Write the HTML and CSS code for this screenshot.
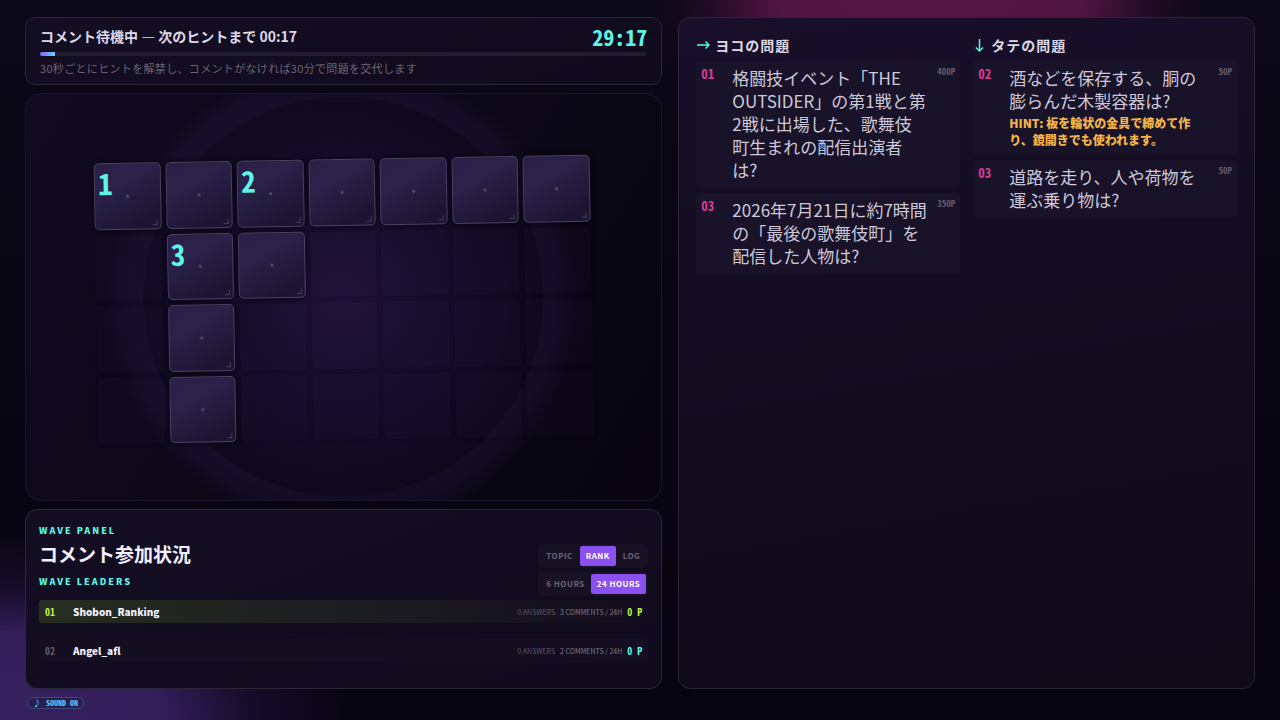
FILE: index.html
```html
<!DOCTYPE html>
<html lang="ja">
<head>
    <meta charset="UTF-8">
    <meta name="viewport" content="width=device-width, initial-scale=1.0">
    <title>クロスワード</title>
    <link rel="stylesheet" href="styles.css">
</head>
<body>
    <main class="layout">
        <div class="left">
            <header class="card status">
                <div class="status-row">
                    <h1>コメント待機中 — 次のヒントまで 00:17</h1>
                    <time class="timer">29:17</time>
                </div>
                <div class="progress"><div class="progress-fill" style="width: 2.4%"></div></div>
                <p>30秒ごとにヒントを解禁し、コメントがなければ30分で問題を交代します</p>
            </header>

            <section class="board">
                <div class="grid">
                    <div class="cell tile"><b>1</b></div>
                    <div class="cell tile"></div>
                    <div class="cell tile"><b>2</b></div>
                    <div class="cell tile"></div>
                    <div class="cell tile"></div>
                    <div class="cell tile"></div>
                    <div class="cell tile"></div>

                    <div class="cell"></div>
                    <div class="cell tile"><b>3</b></div>
                    <div class="cell tile"></div>
                    <div class="cell"></div>
                    <div class="cell"></div>
                    <div class="cell"></div>
                    <div class="cell"></div>

                    <div class="cell"></div>
                    <div class="cell tile"></div>
                    <div class="cell"></div>
                    <div class="cell"></div>
                    <div class="cell"></div>
                    <div class="cell"></div>
                    <div class="cell"></div>

                    <div class="cell"></div>
                    <div class="cell tile"></div>
                    <div class="cell"></div>
                    <div class="cell"></div>
                    <div class="cell"></div>
                    <div class="cell"></div>
                    <div class="cell"></div>
                </div>
            </section>

            <section class="card panel">
                <div class="panel-head">
                    <div class="titles">
                        <p class="eyebrow">WAVE PANEL</p>
                        <h2>コメント参加状況</h2>
                        <p class="eyebrow">WAVE LEADERS</p>
                    </div>
                    <div class="tab-groups">
                        <div class="tabs">
                            <button type="button">TOPIC</button>
                            <button type="button" class="active">RANK</button>
                            <button type="button">LOG</button>
                        </div>
                        <div class="tabs">
                            <button type="button">6 HOURS</button>
                            <button type="button" class="active">24 HOURS</button>
                        </div>
                    </div>
                </div>
                <ol class="leaders">
                    <li class="first">
                        <span class="rank">01</span>
                        <span class="name">Shobon_Ranking</span>
                        <span class="answers">0 ANSWERS</span>
                        <span class="comments">3 COMMENTS / 24H</span>
                        <span class="points">0 P</span>
                    </li>
                    <li>
                        <span class="rank">02</span>
                        <span class="name">Angel_afl</span>
                        <span class="answers">0 ANSWERS</span>
                        <span class="comments">2 COMMENTS / 24H</span>
                        <span class="points">0 P</span>
                    </li>
                </ol>
            </section>
        </div>

        <section class="card clues">
            <div class="clue-col">
                <h2>
                    <svg class="arrow" viewBox="0 0 14 14"><path d="M1 7h12M9.5 3.5L13 7l-3.5 3.5"/></svg>
                    ヨコの問題
                </h2>
                <article class="clue">
                    <span class="no">01</span>
                    <p>格闘技イベント「THE<br>OUTSIDER」の第1戦と第<br>2戦に出場した、歌舞伎<br>町生まれの配信出演者<br>は?</p>
                    <span class="pt">400P</span>
                </article>
                <article class="clue">
                    <span class="no">03</span>
                    <p>2026年7月21日に約7時間<br>の「最後の歌舞伎町」を<br>配信した人物は?</p>
                    <span class="pt">350P</span>
                </article>
            </div>
            <div class="clue-col">
                <h2>
                    <svg class="arrow down" viewBox="0 0 10 14"><path d="M5 1v12M1.5 9.5L5 13l3.5-3.5"/></svg>
                    タテの問題
                </h2>
                <article class="clue">
                    <span class="no">02</span>
                    <div>
                        <p>酒などを保存する、胴の<br>膨らんだ木製容器は?</p>
                        <p class="hint">HINT: 板を輪状の金具で締めて作<br>り、鏡開きでも使われます。</p>
                    </div>
                    <span class="pt">50P</span>
                </article>
                <article class="clue">
                    <span class="no">03</span>
                    <p>道路を走り、人や荷物を<br>運ぶ乗り物は?</p>
                    <span class="pt">50P</span>
                </article>
            </div>
        </section>
    </main>

    <footer>
        <button type="button" class="sound"><span>♪</span>SOUND ON</button>
    </footer>
</body>
</html>
```

FILE: styles.css
```css
:root {
    --cyan: #5ff5e6;
    --lime: #c0f04a;
    --pink: #d83c94;
    --violet: #8b50f0;
    --mono: "Noto Sans Mono CJK JP", "Noto Sans CJK JP", monospace;
}

* {
    box-sizing: border-box;
    margin: 0;
    padding: 0;
}

body {
    display: flex;
    flex-direction: column;
    min-height: 100vh;
    padding: 17px 25px 11px;
    font-family: "Noto Sans CJK JP", sans-serif;
    color: #dcd8e8;
    background:
        radial-gradient(ellipse 280px 190px at 930px -10px, #561640 0, #501540 55%, rgba(60, 16, 52, 0.4) 80%, transparent 100%),
        radial-gradient(ellipse 360px 190px at 0 720px, #36205f 0, #331e5a 45%, rgba(36, 20, 66, 0.5) 70%, transparent 100%),
        linear-gradient(#0b0817, #06040f);
}

button {
    font-family: inherit;
    border: none;
    cursor: pointer;
}

.layout {
    flex: 1;
    display: grid;
    grid-template-columns: 21fr 19fr;
    gap: 16px;
}

.left {
    display: grid;
    grid-template-rows: auto 1fr auto;
    gap: 8px;
}

.card {
    border: 1px solid #2c2737;
    border-radius: 12px;
    background: linear-gradient(160deg, #140e23, #0f0a1c);
}

/* status bar */
.status {
    padding: 5px 14px 8px;
    border-radius: 10px;
}

.status-row {
    display: flex;
    align-items: center;
    justify-content: space-between;
    height: 29px;
    padding-bottom: 3px;
}

.status h1 {
    font-size: 14px;
    font-weight: 600;
    line-height: 20px;
}

.timer {
    font-family: var(--mono);
    font-size: 22px;
    font-weight: 700;
    line-height: 26px;
    color: var(--cyan);
}

.progress {
    height: 4px;
    border-radius: 2px;
    background: #221c2f;
}

.progress-fill {
    height: 100%;
    border-radius: 2px 0 0 2px;
    background: linear-gradient(90deg, #8b60f4, #66d4fa);
}

.status p {
    margin-top: 4px;
    font-size: 11px;
    line-height: 16px;
    letter-spacing: 0.03em;
    color: #6a6477;
}

/* board */
.board {
    display: flex;
    align-items: center;
    justify-content: center;
    padding-top: 6px;
    border: 1px solid #1b1530;
    border-radius: 16px;
    background:
        radial-gradient(circle closest-side, transparent 98%, rgba(60, 46, 110, 0.12) 99%, rgba(60, 46, 110, 0.1) 108%, transparent 116%),
        radial-gradient(circle at center, #1e1238 0, #150d28 32%, transparent 62%),
        linear-gradient(120deg, #110b20, #0a0715 70%, #080511);
}

.grid {
    display: grid;
    grid-template-columns: repeat(7, 1fr);
    gap: 5px;
    width: 78%;
    transform: rotate(-1deg);
}

.cell {
    position: relative;
    aspect-ratio: 1;
    border-radius: 4px;
    background: rgba(50, 30, 90, 0.06);
    box-shadow: 0 0 4px rgba(4, 2, 12, 0.25);
}

.tile {
    border: 1px solid #4c445f;
    border-radius: 5px;
    background:
        radial-gradient(circle at center, #574b6d 0, #574b6d 1px, transparent 2px),
        linear-gradient(150deg, #2a2047, #2b2149 35%, #1b1531 85%);
    box-shadow: 0 0 5px #06030f;
}

.tile::after {
    content: "";
    position: absolute;
    right: 3px;
    bottom: 3px;
    width: 4px;
    height: 4px;
    border: solid #453c58;
    border-width: 0 1px 1px 0;
}

.tile b {
    position: absolute;
    top: 0;
    left: 3px;
    font-family: var(--mono);
    font-size: 29px;
    line-height: 36px;
    color: var(--cyan);
}

/* wave panel */
.panel {
    padding: 13px 13px 26px;
}

.panel-head {
    display: flex;
    justify-content: space-between;
    align-items: flex-end;
}

.eyebrow {
    font-size: 9px;
    font-weight: 900;
    line-height: 16px;
    letter-spacing: 2px;
    color: var(--cyan);
}

.panel h2 {
    margin: 0 0 6px;
    font-size: 19px;
    font-weight: 700;
    line-height: 29px;
    color: #f4f0ff;
}

.tab-groups {
    display: flex;
    flex-direction: column;
    gap: 4px;
    margin-bottom: -6px;
}

.tabs {
    display: flex;
    justify-content: space-between;
    padding: 2px;
    border-radius: 4px;
    background: #171223;
}

.tabs button {
    padding: 0 6px;
    border-radius: 2px;
    font-size: 8px;
    font-weight: 700;
    line-height: 20px;
    letter-spacing: 0.06em;
    color: #6a6477;
    background: none;
}

.tabs .active {
    color: #fff;
    background: var(--violet);
}

.leaders {
    display: grid;
    gap: 16px;
    margin-top: 10px;
    list-style: none;
}

.leaders li {
    display: flex;
    align-items: center;
    gap: 5px;
    height: 23px;
    padding: 0 6px;
    border-radius: 3px;
    font-size: 7px;
    color: #817b8e;
    background: #130e20;
}

.leaders .first {
    background: linear-gradient(90deg, #262d20, #1a1a20 60%, #120d1e);
}

.rank {
    width: 23px;
    font-family: var(--mono);
    font-size: 10px;
    font-weight: 700;
    color: #625c70;
}

.name {
    flex: 1;
    font-size: 10px;
    font-weight: 900;
    color: #f4f0ff;
}

.answers {
    color: #5d576a;
}

.points {
    font-family: var(--mono);
    font-size: 10px;
    font-weight: 700;
    color: var(--cyan);
}

.first .rank,
.first .points {
    color: var(--lime);
}

/* clues */
.clues {
    display: grid;
    grid-template-columns: 1fr 1fr;
    align-items: start;
    gap: 13px;
    padding: 16px 17px;
    background: linear-gradient(170deg, #190f29, #130e22 30%, #0e0a18);
}

.clue-col {
    display: grid;
    gap: 6px;
}

.clues h2 {
    display: flex;
    align-items: center;
    gap: 5px;
    height: 21px;
    font-size: 14px;
    font-weight: 700;
    letter-spacing: 1px;
}

.arrow {
    width: 14px;
    height: 14px;
    fill: none;
    stroke: var(--cyan);
    stroke-width: 1.5;
}

.arrow.down {
    width: 13px;
}

.clue {
    display: grid;
    grid-template-columns: 31px 1fr auto;
    align-items: start;
    padding: 5px 5px 6px;
    border-radius: 4px;
    background: #191329;
}

.clue p {
    font-size: 17px;
    line-height: 23px;
    white-space: nowrap;
    color: #cdc8da;
}

.clue .hint {
    margin-top: 2px;
    font-size: 12px;
    font-weight: 900;
    line-height: 17px;
    color: #f2b446;
}

.no {
    font-family: var(--mono);
    font-size: 13px;
    font-weight: 700;
    line-height: 16px;
    color: var(--pink);
}

.pt {
    font-family: var(--mono);
    font-size: 9px;
    font-weight: 700;
    line-height: 11px;
    color: #625c70;
}

/* footer */
footer {
    display: flex;
    padding: 8px 2px 0;
}

.sound {
    display: flex;
    align-items: center;
    gap: 5px;
    height: 12px;
    padding: 0 5px;
    border: 1px solid #44487c;
    border-radius: 6px;
    font-family: var(--mono);
    font-size: 8px;
    font-weight: 700;
    line-height: 10px;
    color: #6ec6ee;
    background: #25204c;
}
```
